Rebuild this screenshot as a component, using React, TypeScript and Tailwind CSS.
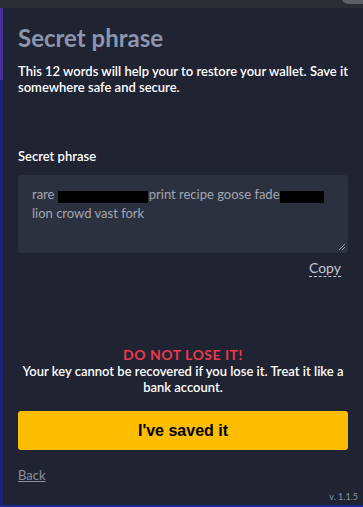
import React from "react";

export default function App() {
  return (
    <div className="relative flex h-[507px] w-[363px] flex-col overflow-hidden bg-[#1f2332] font-['Lato','Noto_Sans',sans-serif]">
      {/* window top bar */}
      <div className="relative h-2 shrink-0 bg-[#2b2d31]">
        <div className="absolute -top-3 right-[-6px] h-4 w-7 rounded-full bg-[#5d6063]" />
      </div>

      <div className="flex min-h-0 flex-1">
        {/* side accent */}
        <div className="flex w-[3px] shrink-0 flex-col">
          <div className="h-[72px] bg-[#4b2c9c]" />
          <div className="flex-1 bg-[#1c2479]" />
        </div>

        <div className="flex flex-1 flex-col pl-[15px] pr-[15px]">
          <h1 className="mt-[14px] text-[24px] font-bold leading-[32px] text-[#8d96ac]">Secret phrase</h1>
          <p className="mt-[9px] text-[13px] font-semibold leading-[16px] text-white">
            This 12 words will help your to restore your wallet. Save it somewhere safe and secure.
          </p>

          <label className="mt-[53px] text-[13px] font-semibold leading-[16px] text-white">Secret phrase</label>
          <div className="relative mt-[11px] h-[78px] rounded-[4px] bg-[#2c313f] pl-[14px] pr-3 pt-[10px] text-[13px] leading-[19px] text-[#a0a6b2]">
            rare <span className="inline-block h-[12px] w-[90px] translate-y-[1px] bg-black align-middle" />
            <span className="ml-[1px]">print recipe goose fade</span>
            <span className="inline-block h-[12px] w-[44px] translate-y-[1px] bg-black align-middle" />
            <br />
            lion crowd vast fork
            <svg className="absolute bottom-[2px] right-[2px]" width="8" height="8" viewBox="0 0 8 8">
              <path d="M1 7 L7 1 M4 7 L7 4" stroke="#a0a5b0" strokeWidth="1" />
            </svg>
          </div>
          <div className="mr-[7px] mt-[7px] flex justify-end">
            <button className="border-b border-dashed border-[#c4c8d0] text-[14px] leading-[16px] text-[#c4c8d0]">Copy</button>
          </div>

          <div className="mt-[70px] text-center text-[14px] font-bold uppercase leading-[16px] tracking-[0.5px] text-[#ec3a4b]">
            Do not lose it!
          </div>
          <p className="text-center text-[13px] font-semibold leading-[16px] text-white">
            Your key cannot be recovered if you lose it. Treat it like a bank account.
          </p>

          <button className="mt-[16px] h-[39px] rounded-[3px] bg-[#fdbd00] font-['Liberation_Sans',Arial,sans-serif] text-[16px] font-bold text-black">
            I've saved it
          </button>

          <div className="mt-[17px] flex">
            <a className="text-[13px] leading-[16px] text-[#8a90a0] underline">Back</a>
          </div>
          <div className="mr-[-10px] mt-[8px] flex justify-end">
            <span className="text-[9px] leading-[12px] text-[#8c93a3]">v. 1.1.5</span>
          </div>
        </div>
      </div>

      {/* bottom accent */}
      <div className="h-[2px] shrink-0 bg-[#1d2a8c]" />
    </div>
  );
}
